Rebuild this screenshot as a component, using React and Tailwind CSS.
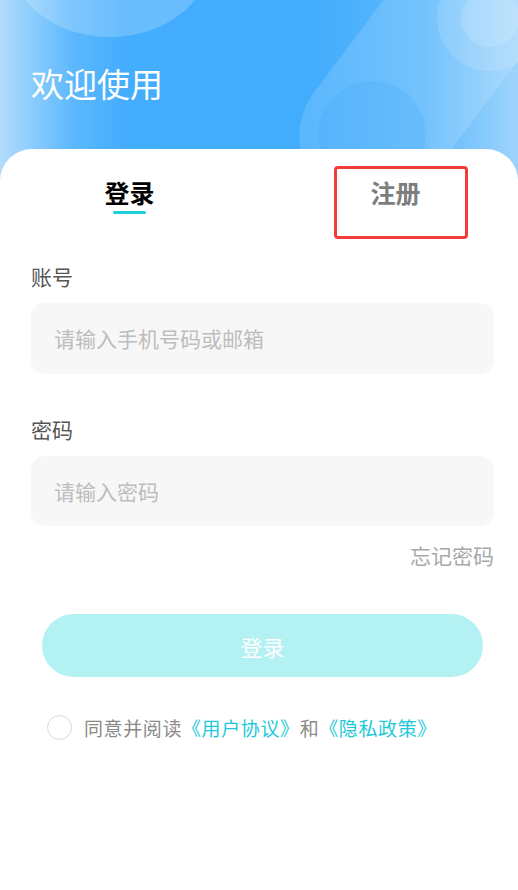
import React from "react";

function HeaderArt() {
  return (
    <svg className="absolute inset-0" width="518" height="200" viewBox="0 0 518 200">
      <defs>
        <linearGradient id="bg" x1="0" y1="0" x2="1" y2="0">
          <stop offset="0" stopColor="#b3dcfc" />
          <stop offset="0.06" stopColor="#8ccdfd" />
          <stop offset="0.14" stopColor="#5db8fd" />
          <stop offset="0.24" stopColor="#44adfd" />
          <stop offset="0.6" stopColor="#42adfd" />
          <stop offset="0.82" stopColor="#5cb9fd" />
          <stop offset="1" stopColor="#9ed4fc" />
        </linearGradient>
      </defs>
      <rect x="0" y="0" width="518" height="200" fill="url(#bg)" />
      <ellipse cx="110" cy="-42" rx="100" ry="79" fill="#ffffff" fillOpacity="0.2" />
      <g transform="rotate(37 372 135)">
        <rect x="300" y="-260" width="144" height="468" rx="72" fill="#ffffff" fillOpacity="0.14" />
      </g>
      <circle cx="372" cy="135" r="54" fill="#2a9ffa" fillOpacity="0.14" />
      <circle cx="490" cy="18" r="53" fill="#ffffff" fillOpacity="0.12" />
      <circle cx="490" cy="18" r="29" fill="#ffffff" fillOpacity="0.14" />
    </svg>
  );
}

export default function App() {
  const font = { fontFamily: '"Noto Sans CJK SC", "Noto Sans", sans-serif' };
  return (
    <div className="w-[518px] h-[890px] bg-white overflow-hidden" style={font}>
      <div className="relative h-[190px]">
        <HeaderArt />
        <div className="relative pl-[31px] pt-[67px] text-[33px] leading-none text-white">欢迎使用</div>
      </div>
      <div className="relative -mt-[41px] bg-white rounded-t-[32px] h-[782px]">
        <div className="flex pt-[31px]">
          <div className="w-[259px] flex flex-col items-center">
            <div className="text-[25px] leading-none font-bold text-black">登录</div>
            <div className="mt-[6px] h-[3px] w-[33px] rounded-full bg-[#1fd0dc]" />
          </div>
          <div className="relative w-[259px] flex flex-col items-center pl-[14px]">
            <div className="text-[25px] leading-none font-bold text-[#7d7d7d]">注册</div>
            <div className="absolute left-[75px] -top-[14px] w-[134px] h-[73px] border-[3px] border-[#f23c3c] rounded-[4px]" />
          </div>
        </div>
        <div className="pl-[31px] pr-[24px]">
          <div className="mt-[52px] text-[21px] leading-none text-[#555555]">账号</div>
          <div className="mt-[16px] h-[71px] rounded-[14px] bg-[#f7f7f7] flex items-center pl-[23px] text-[21px] leading-none text-[#bdbdbd]">
            请输入手机号码或邮箱
          </div>
          <div className="mt-[45px] text-[21px] leading-none text-[#555555]">密码</div>
          <div className="mt-[16px] h-[70px] rounded-[14px] bg-[#f7f7f7] flex items-center pl-[23px] text-[21px] leading-none text-[#bdbdbd]">
            请输入密码
          </div>
          <div className="mt-[19px] text-right text-[21px] leading-none text-[#a8a8a8]">忘记密码</div>
          <div className="mt-[48px] mx-[11px] h-[63px] rounded-full bg-[#b3f1f3] flex items-center justify-center text-[22px] leading-none text-white">
            登录
          </div>
          <div className="mt-[38px] ml-[16px] flex items-center">
            <div className="w-[25px] h-[25px] rounded-full border-[1.5px] border-[#d9d9d9]" />
            <div className="ml-[12px] text-[19px] leading-none tracking-[0.6px] text-[#8a8a8a] whitespace-nowrap">
              同意并阅读<span className="text-[#1ec9d9]">《用户协议》</span>和<span className="text-[#1ec9d9]">《隐私政策》</span>
            </div>
          </div>
        </div>
      </div>
    </div>
  );
}
